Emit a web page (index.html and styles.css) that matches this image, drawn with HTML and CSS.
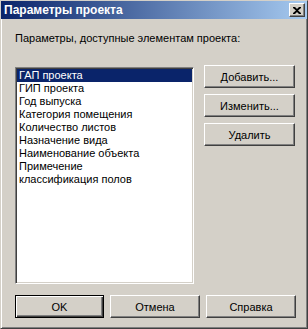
FILE: index.html
```html
<!DOCTYPE html>
<html lang="ru">
<head>
    <meta charset="UTF-8">
    <title>Параметры проекта</title>
    <link rel="stylesheet" href="styles.css">
</head>
<body>
    <div class="window">
        <div class="titlebar">
            <span class="title">Параметры проекта</span>
            <span class="close">
                <svg width="8" height="7" viewBox="0 0 8 7">
                    <path d="M0 0h2l2 2 2-2h2v1L5 3.5 8 6v1H6L4 5 2 7H0V6l3-2.5L0 1z" fill="#000"/>
                </svg>
            </span>
        </div>
        <div class="content">
            <div class="caption">Параметры, доступные элементам проекта:</div>
            <div class="main">
                <ul class="listbox">
                    <li class="selected">ГАП проекта</li>
                    <li>ГИП проекта</li>
                    <li>Год выпуска</li>
                    <li>Категория помещения</li>
                    <li>Количество листов</li>
                    <li>Назначение вида</li>
                    <li>Наименование объекта</li>
                    <li>Примечение</li>
                    <li>классификация полов</li>
                </ul>
                <div class="side">
                    <button class="btn">Добавить...</button>
                    <button class="btn">Изменить...</button>
                    <button class="btn">Удалить</button>
                </div>
            </div>
            <div class="footer">
                <button class="btn default">OK</button>
                <button class="btn">Отмена</button>
                <button class="btn">Справка</button>
            </div>
        </div>
    </div>
</body>
</html>
```

FILE: styles.css
```css
body {
    margin: 0;
    background: #d4d0c8;
    font-family: "Liberation Sans", Arial, sans-serif;
    font-size: 11px;
    color: #000;
}
.window {
    width: 308px;
    height: 329px;
    box-sizing: border-box;
    border: 1px solid;
    border-color: #d4d0c8 #404040 #404040 #d4d0c8;
    box-shadow: inset 1px 1px #fff, inset -1px -1px #808080;
    background: #d4d0c8;
}
.titlebar {
    height: 18px;
    display: flex;
    align-items: center;
    justify-content: space-between;
    padding: 0 2px 0 3px;
    background: linear-gradient(to right, #0a246a, #a6caf0);
}
.title {
    color: #fff;
    font-weight: bold;
    font-size: 12px;
}
.close {
    width: 16px;
    height: 14px;
    box-sizing: border-box;
    display: flex;
    align-items: center;
    justify-content: center;
    background: #d4d0c8;
    border: 1px solid;
    border-color: #fff #404040 #404040 #fff;
    box-shadow: inset -1px -1px #808080;
}
.content {
    padding: 13px 0 0 14px;
}
.caption {
    line-height: 13px;
    height: 13px;
}
.main {
    display: flex;
    align-items: flex-start;
    margin-top: 20px;
}
.listbox {
    list-style: none;
    margin: 2px 0 0;
    padding: 1px 0 0;
    width: 179px;
    height: 217px;
    box-sizing: border-box;
    background: #fff;
    border: 1px solid;
    border-color: #808080 #fff #fff #808080;
    box-shadow: inset 1px 1px #404040, inset -1px -1px #d4d0c8;
}
.listbox li {
    height: 13px;
    line-height: 13px;
    margin: 0 1px;
    padding-left: 2px;
}
.listbox .selected {
    background: #0a246a;
    color: #fff;
}
.side {
    display: flex;
    flex-direction: column;
    gap: 6px;
    margin-left: 10px;
}
.btn {
    width: 91px;
    height: 23px;
    box-sizing: border-box;
    padding: 0;
    font-family: "Liberation Sans", Arial, sans-serif;
    font-size: 11px;
    color: #000;
    background: #d4d0c8;
    border: 1px solid;
    border-color: #fff #404040 #404040 #fff;
    box-shadow: inset -1px -1px #808080;
}
.footer {
    display: flex;
    gap: 6px;
    margin-top: 11px;
}
.footer .btn {
    width: 90px;
}
.btn.default {
    width: 89px;
    border-color: #000;
    box-shadow: inset 1px 1px #fff, inset -1px -1px #404040, inset -2px -2px #808080;
}
```
